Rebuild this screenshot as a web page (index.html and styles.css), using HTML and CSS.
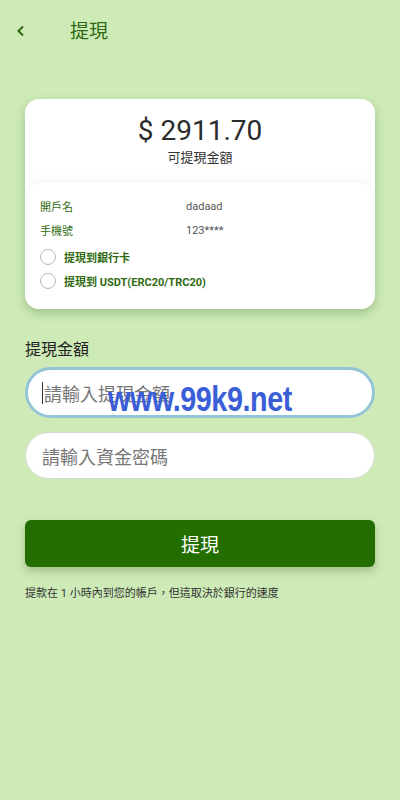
FILE: index.html
```html
<!DOCTYPE html>
<html lang="zh-Hant">
<head>
<meta charset="utf-8">
<link rel="stylesheet" href="styles.css">
</head>
<body>
<div class="page">
  <header class="topbar">
    <span class="back">
      <svg width="10" height="12" viewBox="0 0 10 12"><path d="M7 1.5 L2.5 6 L7 10.5" fill="none" stroke="#2f6a12" stroke-width="2"/></svg>
    </span>
    <h1 class="title">提現</h1>
  </header>

  <section class="card">
    <div class="balance">
      <div class="amount">$ 2911.70</div>
      <div class="amount-label">可提現金額</div>
    </div>
    <div class="details">
      <div class="row"><span class="key">開戶名</span><span class="val">dadaad</span></div>
      <div class="row"><span class="key">手機號</span><span class="val">123****</span></div>
      <label class="radio first"><span class="circle"></span><span class="rtext">提現到銀行卡</span></label>
      <label class="radio"><span class="circle"></span><span class="rtext">提現到 USDT(ERC20/TRC20)</span></label>
    </div>
  </section>

  <div class="field-label">提現金額</div>
  <div class="input focus"><span class="caret"></span><span class="ph">請輸入提現金額</span><span class="wm">www.99k9.net</span></div>
  <div class="input"><span class="ph">請輸入資金密碼</span></div>

  <button class="submit">提現</button>
  <p class="note">提款在 1 小時內到您的帳戶，但這取決於銀行的速度</p>
</div>
</body>
</html>
```

FILE: styles.css
```css
* { box-sizing: border-box; }
html, body { margin: 0; padding: 0; }
body {
  width: 400px;
  height: 800px;
  background: #cdeab7;
  font-family: Roboto, "Noto Sans CJK TC", sans-serif;
  overflow: hidden;
}
.page { padding: 0 25px; }
.topbar {
  height: 62px;
  display: flex;
  align-items: center;
  margin-left: -11px;
}
.back { width: 14px; display: flex; align-items: center; justify-content: center; }
.title {
  margin: 0 0 0 42px;
  font-size: 19px;
  font-weight: 400;
  color: #2f6a12;
  line-height: 1;
}
.card {
  margin-top: 37px;
  background: #fff;
  border-radius: 14px;
  box-shadow: 0 4px 10px rgba(80, 120, 60, 0.35);
  overflow: hidden;
}
.balance {
  height: 84px;
  display: flex;
  flex-direction: column;
  align-items: center;
  padding-top: 14px;
}
.amount {
  font-size: 28px;
  color: #2b2b2b;
  line-height: 36px;
}
.amount-label {
  font-size: 13px;
  color: #333;
  line-height: 18px;
}
.details {
  margin: 0 3px;
  border-radius: 12px 12px 0 0;
  box-shadow: 0 -4px 8px rgba(0,0,0,0.04);
  padding: 11px 12px 16px;
}
.row {
  display: flex;
  height: 24px;
  align-items: center;
  font-size: 11px;
}
.key { width: 146px; color: #2f6a12; }
.val { color: #555; }
.radio {
  display: flex;
  align-items: center;
  height: 24px;
}
.radio.first { margin-top: 3px; }
.circle {
  width: 16px; height: 16px;
  border: 1px solid #b7b7b7;
  border-radius: 50%;
  margin-right: 8px;
}
.rtext { font-size: 11px; font-weight: 700; color: #2f6a12; }
.field-label {
  margin-top: 31px;
  font-size: 16px;
  color: #222;
  line-height: 20px;
}
.input {
  position: relative;
  height: 47px;
  margin-top: 10px;
  background: #fff;
  border: 1px solid #d6dcd3;
  border-radius: 24px;
  display: flex;
  align-items: center;
  padding-left: 16px;
}
.input.focus {
  height: 51px;
  margin-top: 7px;
  border: 3px solid #94c5d6;
  border-radius: 26px;
  padding-left: 14px;
}
.input + .input { margin-top: 14px; }
.ph { font-size: 18px; color: #777; }
.caret { width: 1px; height: 22px; background: #333; margin-right: 1px; }
.wm {
  position: absolute;
  left: 80px;
  top: 14px;
  font-family: "Liberation Sans", Arial, sans-serif;
  font-weight: 700;
  font-size: 35px;
  line-height: 30px;
  color: #3a5ed6;
  transform: scaleX(0.82);
  transform-origin: left center;
  letter-spacing: -0.5px;
  white-space: nowrap;
}
.submit {
  display: block;
  width: 100%;
  height: 47px;
  margin-top: 41px;
  background: #236e00;
  color: #fff;
  border: none;
  border-radius: 6px;
  font-family: Roboto, "Noto Sans CJK TC", sans-serif;
  font-size: 19px;
  box-shadow: 0 4px 8px rgba(60, 90, 40, 0.3);
}
.note {
  margin: 17px 0 0;
  font-size: 11px;
  color: #333;
}
```
